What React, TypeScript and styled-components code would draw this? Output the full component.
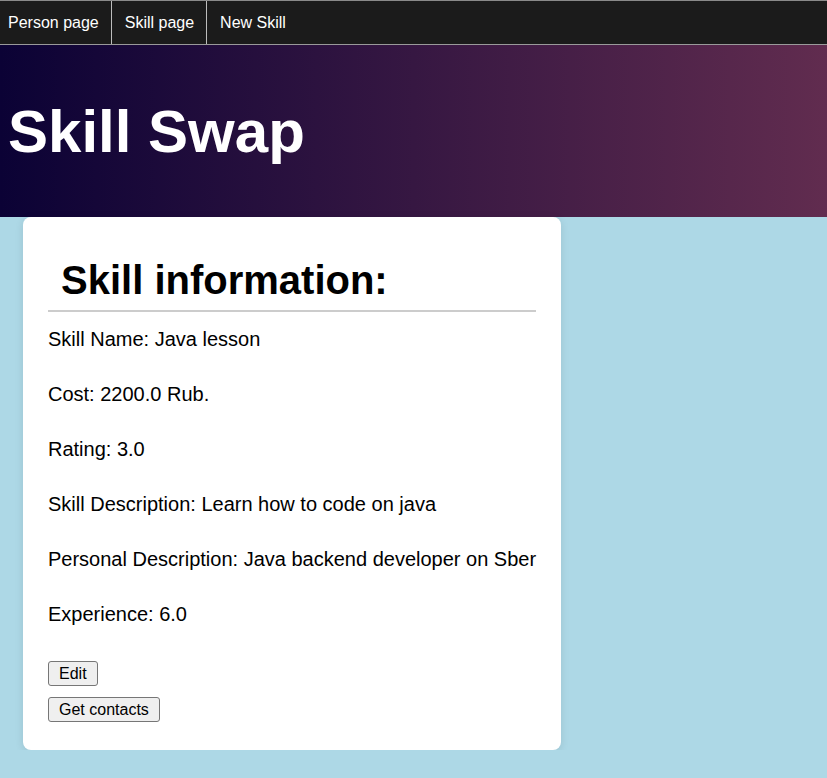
import styled, { createGlobalStyle } from "styled-components";

const GlobalStyle = createGlobalStyle`
  html, body {
    margin: 0;
    padding: 0;
    background-color: #add8e6;
    font-family: "Liberation Sans", Arial, sans-serif;
  }
  * {
    box-sizing: border-box;
  }
`;

const NavBar = styled.nav`
  display: flex;
  height: 45px;
  background-color: #1b1b1b;
  border-top: 1px solid #8a8a8a;
  border-bottom: 1px solid #9a9a9a;
`;

const NavLink = styled.a<{ $first?: boolean }>`
  display: flex;
  align-items: center;
  padding: 0 12px 0 ${(p) => (p.$first ? "8px" : "13px")};
  color: #ffffff;
  font-size: 16px;
  text-decoration: none;
  border-right: 1px solid #bdbdbd;
  &:last-child {
    border-right: none;
  }
`;

const Header = styled.header`
  padding: 52px 8px 51px;
  background: linear-gradient(to right, #0b0235, #612c4f);
`;

const Title = styled.h1`
  margin: 0;
  color: #ffffff;
  font-size: 60px;
  font-weight: bold;
`;

const Card = styled.section`
  width: 538px;
  margin-left: 23px;
  padding: 25px 25px 28px;
  background-color: #ffffff;
  border-radius: 8px;
  box-shadow: 0 2px 8px rgba(0, 0, 0, 0.1);
  display: flex;
  flex-direction: column;
`;

const CardTitle = styled.h2`
  margin: 16px 0 0;
  padding: 0 13px 7px;
  font-size: 40px;
  font-weight: bold;
  color: #000;
  border-bottom: 2px solid #cccccc;
`;

const Field = styled.p`
  margin: 16px 0;
  font-size: 20px;
  color: #000;
  white-space: nowrap;
`;

const Actions = styled.div`
  display: flex;
  flex-direction: column;
  align-items: flex-start;
  gap: 11px;
  margin-top: 19px;
`;

const Button = styled.button`
  height: 25px;
  padding: 0 10px;
  font-family: "Liberation Sans", Arial, sans-serif;
  font-size: 16px;
  color: #000;
  background-color: #efefef;
  border: 1px solid #767676;
  border-radius: 3px;
`;

const skill = {
  name: "Java lesson",
  cost: "2200.0",
  rating: "3.0",
  description: "Learn how to code on java",
  personal: "Java backend developer on Sber",
  experience: "6.0",
};

export default function App() {
  return (
    <>
      <GlobalStyle />
      <NavBar>
        <NavLink $first>Person page</NavLink>
        <NavLink>Skill page</NavLink>
        <NavLink>New Skill</NavLink>
      </NavBar>
      <Header>
        <Title>Skill Swap</Title>
      </Header>
      <Card>
        <CardTitle>Skill information:</CardTitle>
        <Field>Skill Name: {skill.name}</Field>
        <Field>Cost: {skill.cost} Rub.</Field>
        <Field>Rating: {skill.rating}</Field>
        <Field>Skill Description: {skill.description}</Field>
        <Field>Personal Description: {skill.personal}</Field>
        <Field>Experience: {skill.experience}</Field>
        <Actions>
          <Button>Edit</Button>
          <Button>Get contacts</Button>
        </Actions>
      </Card>
    </>
  );
}
